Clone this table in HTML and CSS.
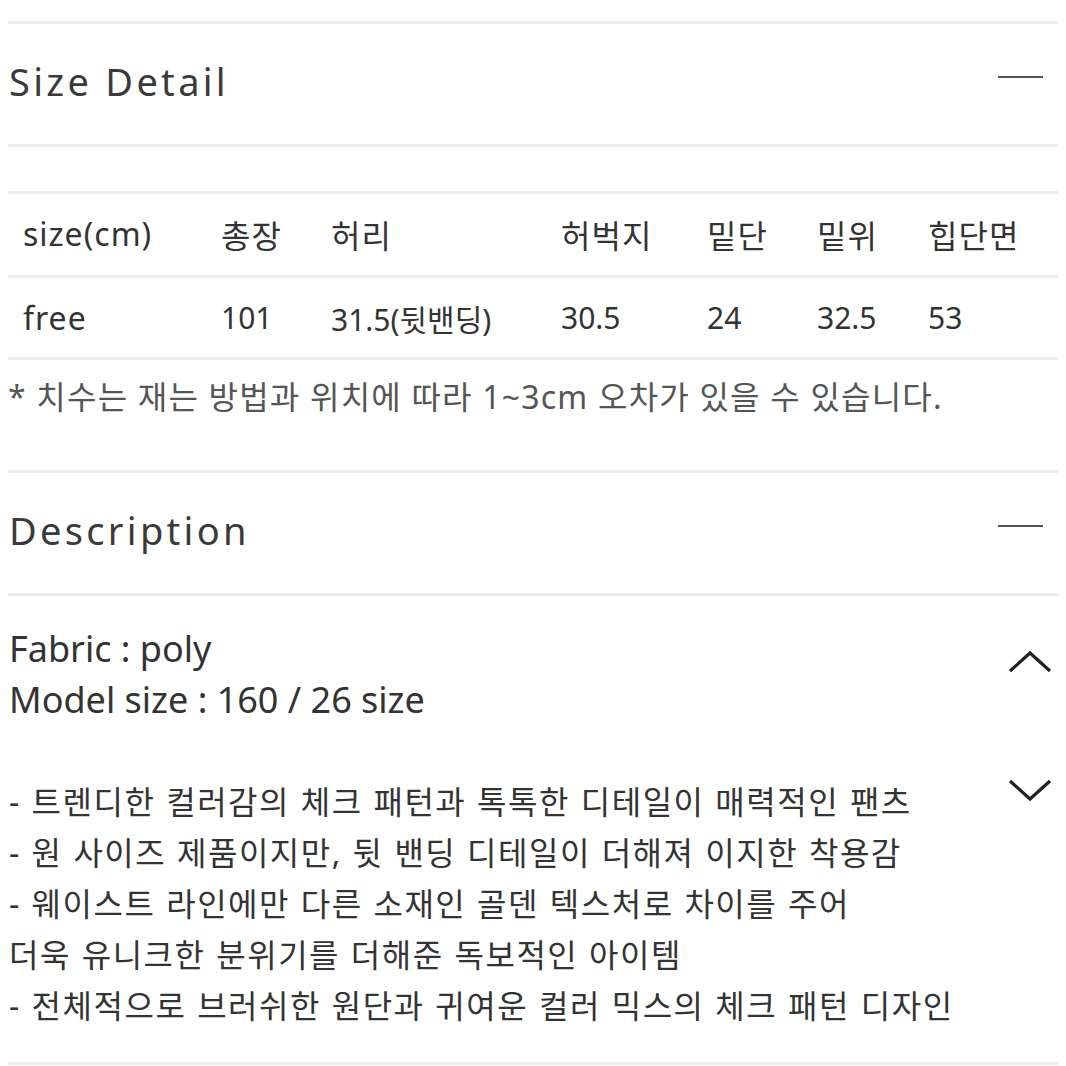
FILE: index.html
```html
<!DOCTYPE html>
<html lang="ko">
<head>
    <meta charset="UTF-8">
    <title>Size Detail</title>
    <link rel="stylesheet" href="styles.css">
</head>
<body>
    <div class="page">
        <div class="section-head">
            <h2>Size Detail</h2>
            <span class="minus"></span>
        </div>

        <table class="size-table">
            <colgroup>
                <col style="width:198px">
                <col style="width:110px">
                <col style="width:230px">
                <col style="width:146px">
                <col style="width:110px">
                <col style="width:111px">
                <col>
            </colgroup>
            <tr class="head">
                <td>size(cm)</td>
                <td>총장</td>
                <td>허리</td>
                <td>허벅지</td>
                <td>밑단</td>
                <td>밑위</td>
                <td>힙단면</td>
            </tr>
            <tr>
                <td class="wide">free</td>
                <td>101</td>
                <td>31.5(뒷밴딩)</td>
                <td>30.5</td>
                <td>24</td>
                <td>32.5</td>
                <td>53</td>
            </tr>
        </table>
        <p class="note">* 치수는 재는 방법과 위치에 따라 1~3cm 오차가 있을 수 있습니다.</p>

        <div class="section-head">
            <h2>Description</h2>
            <span class="minus"></span>
        </div>

        <div class="desc">
            <div class="desc-text">
                <p class="spec">Fabric : poly<br>Model size : 160 / 26 size</p>
                <p class="points">
                    - 트렌디한 컬러감의 체크 패턴과 톡톡한 디테일이 매력적인 팬츠<br>
                    - 원 사이즈 제품이지만, 뒷 밴딩 디테일이 더해져 이지한 착용감<br>
                    - 웨이스트 라인에만 다른 소재인 골덴 텍스처로 차이를 주어<br>
                    더욱 유니크한 분위기를 더해준 독보적인 아이템<br>
                    - 전체적으로 브러쉬한 원단과 귀여운 컬러 믹스의 체크 패턴 디자인
                </p>
            </div>
            <div class="arrows">
                <svg viewBox="0 0 44 24" class="arrow"><path d="M2 21L22 3L42 21" fill="none" stroke="#222" stroke-width="3.2"/></svg>
                <svg viewBox="0 0 44 24" class="arrow"><path d="M2 3L22 21L42 3" fill="none" stroke="#222" stroke-width="3.2"/></svg>
            </div>
        </div>
    </div>
</body>
</html>
```

FILE: styles.css
```css
body {
    margin: 0;
    background: #fff;
    font-family: "Noto Sans", "Noto Sans CJK KR", sans-serif;
    color: #333;
}
.page {
    padding: 21px 8px 0 8px;
}
.section-head {
    display: flex;
    align-items: center;
    justify-content: space-between;
    height: 120px;
    border-top: 3px solid #ececec;
    border-bottom: 3px solid #ececec;
}
.section-head h2 {
    margin: 0 0 0 1px;
    font-size: 38px;
    font-weight: 400;
    letter-spacing: 3.3px;
    color: #3a3a3a;
    padding-bottom: 6px;
}
.minus {
    display: block;
    width: 45px;
    height: 2px;
    background: #555;
    margin-right: 15px;
    margin-bottom: 14px;
}
.size-table {
    width: 100%;
    margin-top: 44px;
    border-collapse: collapse;
    table-layout: fixed;
    border-top: 3px solid #ececec;
}
.size-table td {
    height: 79px;
    padding: 0 0 0 15px;
    font-size: 30px;
    color: #333;
    border-bottom: 3px solid #ececec;
    white-space: nowrap;
}
.size-table .head td {
    font-size: 32px;
    letter-spacing: 1px;
    padding-bottom: 2px;
}
.size-table .wide {
    font-size: 32px;
    letter-spacing: 1px;
}
.note {
    margin: 16px 0 52px 0;
    font-size: 32px;
    letter-spacing: 1.2px;
    color: #555;
    line-height: 42px;
}
.desc {
    display: flex;
    justify-content: space-between;
    padding-top: 27px;
    padding-bottom: 31px;
    border-bottom: 3px solid #ececec;
}
.desc-text p {
    margin: 0 0 0 1px;
    font-size: 32px;
    line-height: 51px;
    color: #333;
}
.desc-text .spec {
    font-size: 36px;
    margin-bottom: 51px;
}
.desc-text .points {
    letter-spacing: 1.5px;
    word-spacing: 1px;
}
.arrows {
    display: flex;
    flex-direction: column;
    gap: 104px;
    padding-top: 27px;
    margin-right: 6px;
}
.arrow {
    width: 44px;
    height: 24px;
}
```
